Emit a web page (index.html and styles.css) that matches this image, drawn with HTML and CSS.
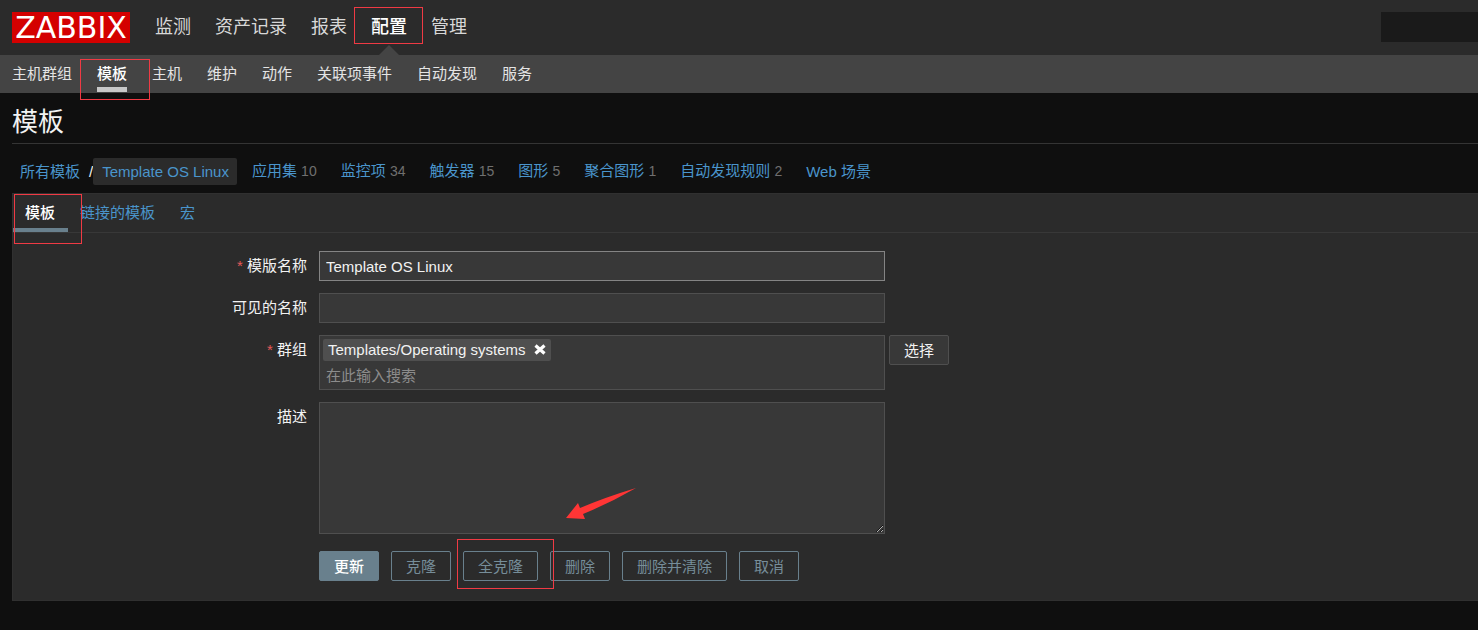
FILE: index.html
```html
<!DOCTYPE html>
<html lang="zh-CN">
<head>
<meta charset="utf-8">
<title>模板</title>
<meta name="viewport" content="width=device-width, initial-scale=1">
<link rel="stylesheet" href="styles.css">
</head>
<body>
<header class="topbar">
  <a class="logo" href="#">ZABBIX</a>
  <nav class="main-nav">
    <a href="#">监测</a>
    <a href="#">资产记录</a>
    <a href="#">报表</a>
    <a class="active" href="#">配置<span class="mark mark-config"></span></a>
    <a href="#">管理</a>
  </nav>
  <input class="search" type="text" aria-label="搜索">
</header>
<nav class="sub-nav">
  <a href="#">主机群组</a>
  <a class="active" href="#">模板<span class="mark mark-templates"></span></a>
  <a href="#">主机</a>
  <a href="#">维护</a>
  <a href="#">动作</a>
  <a href="#">关联项事件</a>
  <a href="#">自动发现</a>
  <a href="#">服务</a>
</nav>
<main class="content">
  <h1>模板</h1>
  <nav class="crumbs">
    <div class="path"><a href="#">所有模板</a><span>/</span><a class="current" href="#">Template OS Linux</a></div>
    <div><a href="#">应用集</a> <span class="count">10</span></div>
    <div><a href="#">监控项</a> <span class="count">34</span></div>
    <div><a href="#">触发器</a> <span class="count">15</span></div>
    <div><a href="#">图形</a> <span class="count">5</span></div>
    <div><a href="#">聚合图形</a> <span class="count">1</span></div>
    <div><a href="#">自动发现规则</a> <span class="count">2</span></div>
    <div><a href="#">Web 场景</a></div>
  </nav>
  <section class="panel">
    <nav class="tabs">
      <a class="active" href="#">模板<span class="mark mark-tab"></span></a>
      <a href="#">链接的模板</a>
      <a href="#">宏</a>
    </nav>
    <form class="form">
      <label class="required" for="name">模版名称</label>
      <div class="field"><input class="control focused" id="name" type="text" value="Template OS Linux"></div>

      <label for="visible">可见的名称</label>
      <div class="field"><input class="control" id="visible" type="text"></div>

      <label class="required" for="groups">群组</label>
      <div class="field">
        <div class="control multiselect">
          <span class="chip">Templates/Operating systems
            <button class="remove" type="button" aria-label="移除"><svg viewBox="0 0 12 12" width="12" height="12"><path d="M1.500 1.500L10.500 9.500M10.500 1.500L1.500 9.500" stroke="#fff" stroke-width="3.200"/></svg></button>
          </span>
          <input id="groups" type="text" placeholder="在此输入搜索">
        </div>
        <button class="btn grey" type="button">选择</button>
      </div>

      <label for="description">描述</label>
      <div class="field described">
        <textarea class="control" id="description"></textarea>
        <svg class="arrow" viewBox="0 0 70 32" width="70" height="32" aria-hidden="true"><path d="M0 30L12 15L14 20Q40 9 70 0Q44 15 17 26L19 31Z" fill="#ff3535"/></svg>
      </div>

      <div class="actions">
        <button class="btn primary" type="button">更新</button>
        <button class="btn" type="button">克隆</button>
        <button class="btn" type="button">全克隆<span class="mark mark-clone"></span></button>
        <button class="btn" type="button">删除</button>
        <button class="btn" type="button">删除并清除</button>
        <button class="btn" type="button">取消</button>
      </div>
    </form>
  </section>
</main>
</body>
</html>
```
FILE: styles.css
```css
* { box-sizing: border-box; }

body {
  margin: 0;
  background: #0f0f0f;
  color: #f2f2f2;
  font: 15px/20px "Liberation Sans", "Noto Sans CJK SC", sans-serif;
}

input, textarea, button { font: inherit; color: inherit; }
a { color: #4a95cc; text-decoration: none; }

/* Header */
.topbar {
  display: flex;
  align-items: flex-start;
  height: 55px;
  padding: 12px 0 0 12px;
  background: #2b2b2b;
}

.logo {
  width: 118px;
  height: 31px;
  margin-right: 25px;
  background: #d40000;
  color: #fff;
  font: 30px/31px "DejaVu Sans", sans-serif;
  text-align: center;
}

.main-nav { display: flex; gap: 24px; height: 43px; }

.main-nav a {
  position: relative;
  color: #d8d8d8;
  font-size: 18px;
  line-height: 30px;
}

.main-nav .active { color: #fff; font-weight: 500; }

.main-nav .active::after {
  content: "";
  position: absolute;
  left: 50%;
  bottom: 0;
  margin-left: -10px;
  border: 10px solid transparent;
  border-top-width: 0;
  border-bottom-color: #444;
}

.search {
  width: 97px;
  height: 30px;
  margin-left: auto;
  border: 0;
  background: #1a1a1a;
}

.sub-nav {
  display: flex;
  gap: 25px;
  height: 38px;
  padding: 0 12px;
  background: #444;
}

.sub-nav a { position: relative; color: #e4e4e4; line-height: 37px; }
.sub-nav .active { color: #fff; font-weight: 500; }

.sub-nav .active::after {
  content: "";
  position: absolute;
  left: 0;
  right: 0;
  bottom: 1px;
  height: 5px;
  background: #c8c8c8;
}

/* Page */
.content { padding-left: 12px; }

h1 {
  height: 51px;
  margin: 0;
  border-bottom: 1px solid #343434;
  font-size: 26px;
  font-weight: 400;
  line-height: 58px;
}

.crumbs {
  display: flex;
  align-items: center;
  gap: 24px;
  height: 49px;
  padding: 5px 8px 0;
  line-height: 27px;
}

.path { display: flex; margin-right: -9px; }
.path span { margin-left: 9px; }
.count { color: #6f6f6f; font-size: 14px; }

.current {
  padding: 0 8px 0 9px;
  border-radius: 2px;
  background: #2b2b2b;
}

.panel {
  border: 1px solid #303030;
  border-right: 0;
  background: #2b2b2b;
}

.tabs {
  display: flex;
  height: 39px;
  border-bottom: 1px solid #383838;
}

.tabs a {
  position: relative;
  padding: 0 13px 0 12px;
  line-height: 37px;
}

.tabs .active {
  border-bottom: 4px solid #69808d;
  color: #fff;
  font-weight: 500;
}

/* Form */
.form {
  display: grid;
  grid-template-columns: 294px 1fr;
  gap: 12px;
  padding: 18px 0 19px;
}

.form label { line-height: 30px; text-align: right; }
.required::before { content: "* "; color: #e45959; }
.field { display: flex; align-items: flex-start; gap: 4px; min-width: 0; }

.control {
  width: 566px;
  max-width: 100%;
  height: 30px;
  padding: 0 6px;
  border: 1px solid #4f4f4f;
  outline: 0;
  background: #383838;
}

.focused { border-color: #848484; }
textarea.control { height: 132px; padding: 6px; }

.multiselect {
  display: flex;
  flex-direction: column;
  align-items: flex-start;
  gap: 4px;
  height: 55px;
  padding: 3px;
}

.multiselect input {
  width: 100%;
  height: 22px;
  padding: 0 3px;
  border: 0;
  outline: 0;
  background: transparent;
}

.multiselect input::placeholder { color: #8c8c8c; }

.chip {
  display: flex;
  align-items: center;
  gap: 8px;
  height: 22px;
  padding: 0 5px;
  border-radius: 2px;
  background: #4f4f4f;
}

.remove { display: flex; padding: 0; border: 0; background: none; }
.described { position: relative; }

.actions {
  grid-column: 2;
  display: flex;
  gap: 12px;
  padding-top: 5px;
}

.btn {
  position: relative;
  height: 30px;
  padding: 2px 14px 0;
  border: 1px solid #69808d;
  border-radius: 2px;
  background: transparent;
  color: #768d99;
  line-height: 26px;
  white-space: nowrap;
}

.primary { background: #69808d; color: #fff; font-weight: 500; }
.grey { border-color: #4f4f4f; background: #383838; color: #f2f2f2; }

/* Red annotations laid over the interface */
.mark {
  position: absolute;
  z-index: 2;
  border: 1px solid #f03a44;
  pointer-events: none;
}

.mark-config { inset: -5px -16px 11px -17px; }
.mark-templates { inset: 4px -23px -7px -17px; }
.mark-tab { inset: 0 -14px -16px 1px; }
.mark-clone { inset: -13px -17px -9px -7px; }
.arrow { position: absolute; left: 247px; top: 86px; }
```
